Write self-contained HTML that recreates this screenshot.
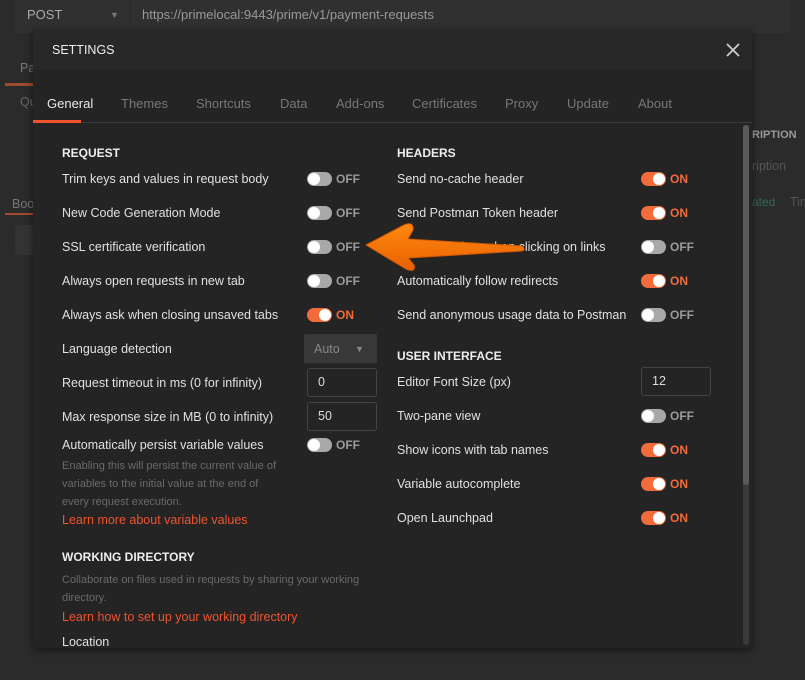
<!DOCTYPE html>
<html><head><meta charset="utf-8"><style>
*{margin:0;padding:0;box-sizing:border-box}
body{width:805px;height:680px;background:#2b2b2b;font-family:"Liberation Sans",sans-serif;font-size:12.5px;color:#e0e0e0;position:relative;overflow:hidden}
.a{position:absolute;white-space:nowrap;line-height:16px}
.h{font-weight:bold;color:#eee;font-size:12px}
.d{color:#6a6a6a;font-size:11px}
.l{color:#f0532e}
.t{position:absolute;width:25px;height:14px;border-radius:7px;background:#a8a8a8}
.t:after{content:"";position:absolute;top:1px;left:1px;width:12px;height:12px;border-radius:6px;background:#fff}
.t.on{background:#f26b3a}
.t.on:after{left:12px}
.tx{position:absolute;font-weight:bold;font-size:12px;line-height:14px;color:#9a9a9a}
.tx.on{color:#f26b3a}
.in{position:absolute;border:1px solid #444;border-radius:3px;padding-left:10px;line-height:27px;color:#ddd}
.tab{position:absolute;top:96px;color:#777;font-size:13px}
</style></head><body>
<div style="position:absolute;left:15px;top:0;width:775px;height:33px;background:#303030;border-radius:0 0 3px 3px"></div>
<div class="a" style="left:27px;top:7px;color:#aaa;font-size:13px">POST</div>
<div class="a" style="left:110px;top:7px;color:#777;font-size:9px">▼</div>
<div style="position:absolute;left:130px;top:0;width:1px;height:33px;background:#2a2a2a"></div>
<div class="a" style="left:142px;top:7px;color:#999;font-size:13px">https://primelocal:9443/prime/v1/payment-requests</div>
<div class="a" style="left:20px;top:60px;color:#777">Pa</div>
<div style="position:absolute;left:5px;top:83px;width:30px;height:3px;background:#a04a30"></div>
<div class="a" style="left:20px;top:94px;color:#666">Qu</div>
<div class="a" style="left:12px;top:196px;color:#777">Boo</div>
<div style="position:absolute;left:5px;top:213px;width:30px;height:2px;background:#a04a30"></div>
<div style="position:absolute;left:15px;top:225px;width:20px;height:30px;background:#333;border-radius:3px"></div>
<div class="a" style="left:752px;top:127px;color:#999;font-size:11px;font-weight:bold">RIPTION</div>
<div class="a" style="left:752px;top:158px;color:#555">ription</div>
<div class="a" style="left:752px;top:194px;color:#2f6b55;font-size:12px">ated</div>
<div class="a" style="left:790px;top:194px;color:#555">Tim</div>

<div style="position:absolute;left:33px;top:30px;width:719px;height:618px;background:#242424;border-radius:3px;box-shadow:0 2px 8px rgba(0,0,0,.5)">
 <div style="height:40px;background:#282828;border-radius:3px 3px 0 0"></div>
 <div style="position:absolute;top:92px;left:0;width:719px;height:1px;background:#3a3a3a"></div>
 <div style="position:absolute;left:0;top:90px;width:48px;height:3px;background:#f0532e"></div>
 <div style="position:absolute;left:710px;top:95px;width:6px;height:520px;background:#3a3a3a;border-radius:3px"></div>
 <div style="position:absolute;left:710px;top:95px;width:6px;height:360px;background:#5a5a5a;border-radius:3px"></div>
</div>
<div class="a" style="left:52px;top:42px;color:#eee;font-size:12.5px">SETTINGS</div>
<svg style="position:absolute;left:726px;top:43px" width="14" height="14"><path d="M1 1L13 13M13 1L1 13" stroke="#ccc" stroke-width="1.8"/></svg>
<div class="tab" style="left:47px;color:#e8e8e8">General</div>
<div class="tab" style="left:121px">Themes</div>
<div class="tab" style="left:196px">Shortcuts</div>
<div class="tab" style="left:280px">Data</div>
<div class="tab" style="left:336px">Add-ons</div>
<div class="tab" style="left:412px">Certificates</div>
<div class="tab" style="left:505px">Proxy</div>
<div class="tab" style="left:567px">Update</div>
<div class="tab" style="left:638px">About</div>

<div class="a h" style="left:62px;top:145px">REQUEST</div>
<div class="a" style="left:62px;top:171px">Trim keys and values in request body</div>
<div class="a" style="left:62px;top:205px">New Code Generation Mode</div>
<div class="a" style="left:62px;top:239px">SSL certificate verification</div>
<div class="a" style="left:62px;top:273px">Always open requests in new tab</div>
<div class="a" style="left:62px;top:307px">Always ask when closing unsaved tabs</div>
<div class="a" style="left:62px;top:341px">Language detection</div>
<div class="a" style="left:62px;top:375px">Request timeout in ms (0 for infinity)</div>
<div class="a" style="left:62px;top:409px">Max response size in MB (0 to infinity)</div>
<div class="a" style="left:62px;top:437px">Automatically persist variable values</div>
<div class="a d" style="left:62px;top:457px;line-height:18px">Enabling this will persist the current value of<br>variables to the initial value at the end of<br>every request execution.</div>
<div class="a l" style="left:62px;top:512px">Learn more about variable values</div>
<div class="a h" style="left:62px;top:549px">WORKING DIRECTORY</div>
<div class="a d" style="left:62px;top:571px;line-height:18px">Collaborate on files used in requests by sharing your working<br>directory.</div>
<div class="a l" style="left:62px;top:609px">Learn how to set up your working directory</div>
<div class="a" style="left:62px;top:634px">Location</div>

<div class="t" style="left:307px;top:172px"></div><div class="tx" style="left:336px;top:172px">OFF</div>
<div class="t" style="left:307px;top:206px"></div><div class="tx" style="left:336px;top:206px">OFF</div>
<div class="t" style="left:307px;top:240px"></div><div class="tx" style="left:336px;top:240px">OFF</div>
<div class="t" style="left:307px;top:274px"></div><div class="tx" style="left:336px;top:274px">OFF</div>
<div class="t on" style="left:307px;top:308px"></div><div class="tx on" style="left:336px;top:308px">ON</div>
<div style="position:absolute;left:304px;top:334px;width:73px;height:29px;background:#383838;border-radius:2px"></div>
<div class="a" style="left:314px;top:341px;color:#888">Auto</div>
<div class="a" style="left:355px;top:341px;color:#888;font-size:9px">▼</div>
<div class="in" style="left:307px;top:368px;width:70px;height:29px">0</div>
<div class="in" style="left:307px;top:402px;width:70px;height:29px">50</div>
<div class="t" style="left:307px;top:438px"></div><div class="tx" style="left:336px;top:438px">OFF</div>

<div class="a h" style="left:397px;top:145px">HEADERS</div>
<div class="a" style="left:397px;top:171px">Send no-cache header</div>
<div class="a" style="left:397px;top:205px">Send Postman Token header</div>
<div class="a" style="left:397px;top:239px">Retain headers when clicking on links</div>
<div class="a" style="left:397px;top:273px">Automatically follow redirects</div>
<div class="a" style="left:397px;top:307px">Send anonymous usage data to Postman</div>
<div class="a h" style="left:397px;top:348px">USER INTERFACE</div>
<div class="a" style="left:397px;top:374px">Editor Font Size (px)</div>
<div class="a" style="left:397px;top:408px">Two-pane view</div>
<div class="a" style="left:397px;top:442px">Show icons with tab names</div>
<div class="a" style="left:397px;top:476px">Variable autocomplete</div>
<div class="a" style="left:397px;top:510px">Open Launchpad</div>

<div class="t on" style="left:641px;top:172px"></div><div class="tx on" style="left:670px;top:172px">ON</div>
<div class="t on" style="left:641px;top:206px"></div><div class="tx on" style="left:670px;top:206px">ON</div>
<div class="t" style="left:641px;top:240px"></div><div class="tx" style="left:670px;top:240px">OFF</div>
<div class="t on" style="left:641px;top:274px"></div><div class="tx on" style="left:670px;top:274px">ON</div>
<div class="t" style="left:641px;top:308px"></div><div class="tx" style="left:670px;top:308px">OFF</div>
<div class="in" style="left:641px;top:367px;width:70px;height:29px">12</div>
<div class="t" style="left:641px;top:409px"></div><div class="tx" style="left:670px;top:409px">OFF</div>
<div class="t on" style="left:641px;top:443px"></div><div class="tx on" style="left:670px;top:443px">ON</div>
<div class="t on" style="left:641px;top:477px"></div><div class="tx on" style="left:670px;top:477px">ON</div>
<div class="t on" style="left:641px;top:511px"></div><div class="tx on" style="left:670px;top:511px">ON</div>

<svg style="position:absolute;left:0;top:0" width="805" height="680">
<defs><linearGradient id="g" x1="0" y1="0" x2="0" y2="1"><stop offset="0" stop-color="#ff8a10"/><stop offset="1" stop-color="#e86000"/></linearGradient></defs>
<path d="M366 245 L404 225 Q414 221 413 230 L408 239 L522 246 Q526 249 522 251 L408 258 L414 265 Q416 273 406 269 Z" fill="url(#g)" stroke="#d45a00" stroke-width="1" stroke-linejoin="round"/>
</svg>
</body></html>
